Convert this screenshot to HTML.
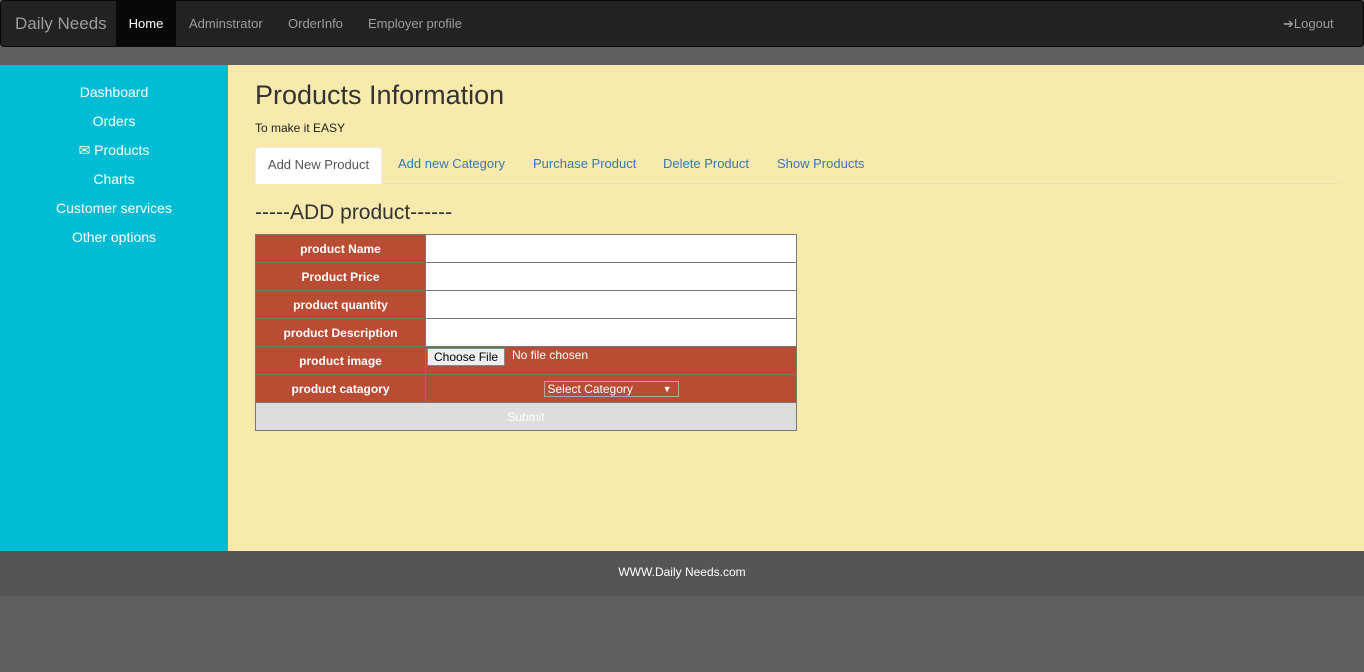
<!DOCTYPE html>
<html><head><style>
*{box-sizing:border-box;margin:0;padding:0}
body{width:1364px;height:672px;background:#5f5f5f;font-family:"Liberation Sans",sans-serif;font-size:13px;position:relative;overflow:hidden}
.nav{position:absolute;left:0;top:0;width:1364px;height:47px;background:#222;border:1px solid #080808;border-radius:4px}
.nav a{position:absolute;top:0;height:45px;line-height:45px;color:#9d9d9d;font-size:13px;text-decoration:none}
.brand{left:14px;font-size:17px!important}
.home{left:115px;width:60px;background:#080808;color:#fff!important;text-align:center}
.side{position:absolute;left:0;top:65px;width:228px;height:486px;background:#00bcd4}
.side div{text-align:center;color:#fff;font-size:14px;height:29px;line-height:29px}
.main{position:absolute;left:228px;top:65px;width:1136px;height:486px;background:#f8e9ad}
h1{position:absolute;left:27px;top:15px;font-size:27px;font-weight:normal;color:#333}
.sub{position:absolute;left:27px;top:56px;font-size:12px;color:#222}
.tabs{position:absolute;left:27px;top:82px;width:1085px;height:37px;border-bottom:1px solid #eee0b0}
.tabs span{position:absolute;top:0;height:37px;line-height:34px;color:#337ab7;font-size:13px}
.tabs .act{left:0;width:127px;background:#fff;border:1px solid #eee;border-bottom:none;border-radius:4px 4px 0 0;color:#555;text-align:center}
h2{position:absolute;left:27px;top:136px;font-size:21px;font-weight:normal;color:#333}
table{position:absolute;left:27px;top:169px;width:542px;border-collapse:collapse;border:1px solid #222}
td{height:28px;border:1px solid #777;font-size:12px;font-weight:bold;color:#fff;background:#b94d33;text-align:center}
td.w{background:#fff}
td.l{width:170px}
.btn{position:absolute;left:1px;top:1px;background:#efefef;border:1px solid #888;color:#000;font-weight:normal;font-size:12px;padding:1px 6px}
.foot{position:absolute;left:0;top:551px;width:1364px;height:45px;background:#555;color:#fff;text-align:center;line-height:43px;font-size:12px}
</style></head><body>
<div class="nav">
<a class="brand">Daily Needs</a>
<a class="home">Home</a>
<a style="left:188px">Adminstrator</a>
<a style="left:287px">OrderInfo</a>
<a style="left:367px">Employer profile</a>
<a style="left:1282px">&#10132;&#xFE0E;Logout</a>
</div>
<div class="side"><div style="height:13px"></div>
<div>Dashboard</div><div>Orders</div><div>&#9993; Products</div><div>Charts</div><div>Customer services</div><div>Other options</div></div>
<div class="main">
<h1>Products Information</h1>
<div class="sub">To make it EASY</div>
<div class="tabs"><span class="act">Add New Product</span><span style="left:143px">Add new Category</span><span style="left:278px">Purchase Product</span><span style="left:408px">Delete Product</span><span style="left:522px">Show Products</span></div>
<h2>-----ADD product------</h2>
<table>
<tr><td class="l">product Name</td><td class="w"></td></tr>
<tr><td class="l">Product Price</td><td class="w"></td></tr>
<tr><td class="l">product quantity</td><td class="w"></td></tr>
<tr><td class="l">product Description</td><td class="w"></td></tr>
<tr><td class="l">product image</td><td style="position:relative;text-align:left;font-weight:normal"><span class="btn">Choose File</span><span style="position:absolute;left:86px;top:1px">No file chosen</span></td></tr>
<tr><td class="l">product catagory</td><td style="font-weight:normal"><span style="display:inline-block;width:135px;border:1px solid #aaa;text-align:left;padding-left:3px;line-height:14px">Select Category <span style="float:right;margin-right:6px;font-size:9px">&#9660;</span></span></td></tr>
<tr><td colspan="2" style="background:#ddd;color:#fff;font-weight:normal">Submit</td></tr>
</table>
</div>
<div class="foot">WWW.Daily Needs.com</div>
</body></html>
